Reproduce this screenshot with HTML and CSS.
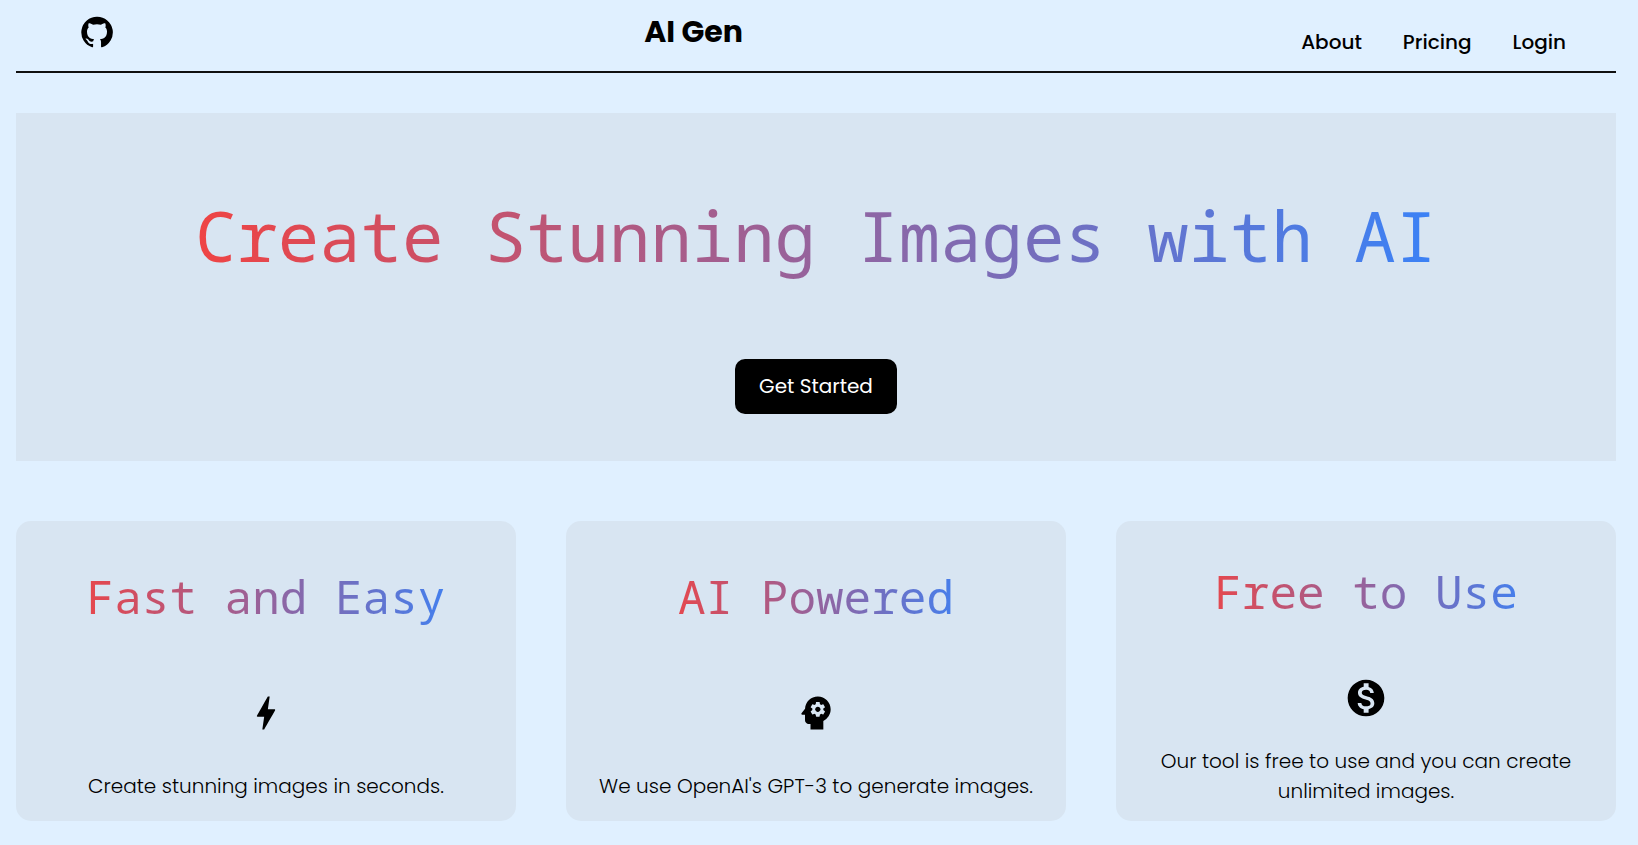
FILE: index.html
```
<!DOCTYPE html>
<html lang="en">
<head>
<meta charset="utf-8">
<meta name="viewport" content="width=device-width, initial-scale=1">
<title>AI Gen</title>
<link rel="stylesheet" href="styles.css">
</head>
<body>
<header class="header">
  <a class="repo" href="#" aria-label="GitHub">
    <svg class="repo-icon" viewBox="0 0 24 24" aria-hidden="true"><path d="M12 1.27a11 11 0 00-3.48 21.46c.55.09.73-.28.73-.55v-1.84c-3.03.64-3.67-1.46-3.67-1.46-.55-1.29-1.28-1.65-1.28-1.65-.92-.65.1-.65.1-.65 1.1 0 1.73 1.1 1.73 1.1.92 1.65 2.57 1.2 3.21.92a2 2 0 01.64-1.47c-2.47-.27-5.04-1.19-5.04-5.5 0-1.1.46-2.1 1.2-2.84a3.76 3.76 0 010-2.93s.91-.28 3.11 1.1c1.8-.49 3.7-.49 5.5 0 2.1-1.38 3.02-1.1 3.02-1.1a3.76 3.76 0 01.1 2.93c.83.74 1.2 1.74 1.2 2.94 0 4.21-2.57 5.13-5.04 5.4.45.37.82.92.82 2.02v3.03c0 .27.1.64.73.55A11 11 0 0012 1.27"/></svg>
  </a>
  <div class="brand">AI Gen</div>
  <nav class="nav">
    <a class="nav-link" href="#">About</a>
    <a class="nav-link" href="#">Pricing</a>
    <a class="nav-link" href="#">Login</a>
  </nav>
</header>
<main>
  <section class="hero">
    <h1 class="hero-title gradient">Create Stunning Images with AI</h1>
    <button class="cta" type="button">Get Started</button>
  </section>
  <section class="cards">
    <article class="card">
      <h2 class="card-title gradient">Fast and Easy</h2>
      <svg class="card-icon" viewBox="0 0 24 24" aria-hidden="true"><path d="M11 21h-1l1-7H7.5c-.88 0-.33-.75-.31-.78C8.48 10.94 10.42 7.54 13.01 3h1l-1 7h3.51c.4 0 .62.19.4.66C12.97 17.55 11 21 11 21z"/></svg>
      <p class="card-text">Create stunning images in seconds.</p>
    </article>
    <article class="card">
      <h2 class="card-title gradient">AI Powered</h2>
      <svg class="card-icon" viewBox="0 0 24 24" aria-hidden="true"><path d="M13 8.57c-.79 0-1.43.64-1.43 1.43s.64 1.43 1.43 1.43 1.43-.64 1.43-1.43-.64-1.43-1.43-1.43z"/><path d="M13 3C9.25 3 6.2 5.94 6.02 9.64L4.1 12.2c-.25.33-.01.8.4.8H6v3c0 1.1.9 2 2 2h1v3h7v-4.68c2.36-1.12 4-3.53 4-6.32 0-3.87-3.13-7-7-7zm3 7c0 .13-.01.26-.02.39l.83.66c.08.06.1.16.05.25l-.8 1.39c-.05.09-.16.12-.24.09l-.99-.4c-.21.16-.43.29-.67.39L14 13.83c-.01.1-.1.17-.2.17h-1.6c-.1 0-.18-.07-.2-.17l-.15-1.06c-.25-.1-.47-.23-.68-.39l-.99.4c-.09.03-.2 0-.25-.09l-.8-1.39c-.05-.08-.03-.19.05-.25l.84-.66c-.01-.13-.02-.26-.02-.39s.02-.27.04-.39l-.85-.66c-.08-.06-.1-.16-.05-.26l.8-1.38c.05-.09.15-.12.24-.09l1 .4c.2-.15.43-.29.67-.39L12 6.17c.02-.1.1-.17.2-.17h1.6c.1 0 .18.07.2.17l.15 1.06c.24.1.46.23.67.39l1-.4c.09-.03.2 0 .24.09l.8 1.38c.05.09.03.2-.05.26l-.85.66c.03.12.04.25.04.39z"/></svg>
      <p class="card-text">We use OpenAI's GPT-3 to generate images.</p>
    </article>
    <article class="card">
      <h2 class="card-title gradient">Free to Use</h2>
      <svg class="card-icon" viewBox="0 0 24 24" aria-hidden="true"><path d="M12 2C6.48 2 2 6.48 2 12s4.48 10 10 10 10-4.48 10-10S17.52 2 12 2zm1.41 16.09V20h-2.67v-1.93c-1.71-.36-3.16-1.46-3.27-3.4h1.96c.1 1.05.82 1.87 2.65 1.87 1.96 0 2.4-.98 2.4-1.59 0-.83-.44-1.61-2.67-2.14-2.48-.6-4.18-1.62-4.18-3.67 0-1.72 1.39-2.84 3.11-3.21V4h2.67v1.95c1.86.45 2.79 1.86 2.85 3.39H14.3c-.05-1.11-.64-1.87-2.22-1.87-1.5 0-2.4.68-2.4 1.64 0 .84.65 1.39 2.67 1.91s4.18 1.39 4.18 3.91c-.02 1.83-1.38 2.83-3.12 3.16z"/></svg>
      <p class="card-text">Our tool is free to use and you can create unlimited images.</p>
    </article>
  </section>
</main>
</body>
</html>
```
FILE: styles.css
```
* {
  box-sizing: border-box;
}

body {
  margin: 0;
  padding: 0 22px 24px 16px;
  background: #e0f0ff;
  color: #000;
  font-family: Poppins, Inter, "Open Sans", sans-serif;
  font-size: 20px;
  line-height: 30px;
}

.header {
  display: flex;
  justify-content: space-between;
  align-items: flex-start;
  padding: 9px 50px 0 64px;
  border-bottom: 2px solid #101010;
  min-height: 73px;
}

.repo {
  display: block;
  color: inherit;
  padding-top: 6px;
}

.repo-icon {
  display: block;
  width: 34px;
  height: 34px;
}

.brand {
  font-size: 30px;
  line-height: 45px;
  font-weight: 700;
  margin-right: 28px;
}

.nav {
  display: flex;
  gap: 41px;
  padding-top: 18px;
}

.nav-link {
  color: inherit;
  font-weight: 500;
  text-decoration: none;
}

.gradient {
  margin: 0;
  background: linear-gradient(to right, #ef4444, #3b82f6);
  -webkit-background-clip: text;
  background-clip: text;
  color: transparent;
  font-family: Consolas, "Noto Sans Mono", "DejaVu Sans Mono", monospace;
  font-weight: 400;
}

.hero {
  display: flex;
  flex-direction: column;
  align-items: center;
  gap: 80px;
  margin-top: 40px;
  padding: 78px 20px 47px;
  background: #d8e5f2;
}

.hero-title {
  font-size: 69px;
  line-height: 88px;
  text-align: center;
}

.cta {
  padding: 12px 24px 13px;
  border: 0;
  border-radius: 10px;
  background: #000;
  color: #fff;
  font: inherit;
}

.cards {
  display: grid;
  grid-template-columns: repeat(3, 1fr);
  gap: 50px;
  margin-top: 60px;
}

.card {
  display: flex;
  flex-direction: column;
  align-items: center;
  justify-content: space-around;
  min-height: 300px;
  padding: 0 20px 2px;
  border-radius: 15px;
  background: #d8e5f2;
  text-align: center;
}

.card-title {
  padding: 27px 20px 29px;
  font-size: 46px;
  line-height: 60px;
}

.card-icon {
  width: 44px;
  height: 44px;
}

.card-text {
  margin: 0;
  font-weight: 300;
}
```
